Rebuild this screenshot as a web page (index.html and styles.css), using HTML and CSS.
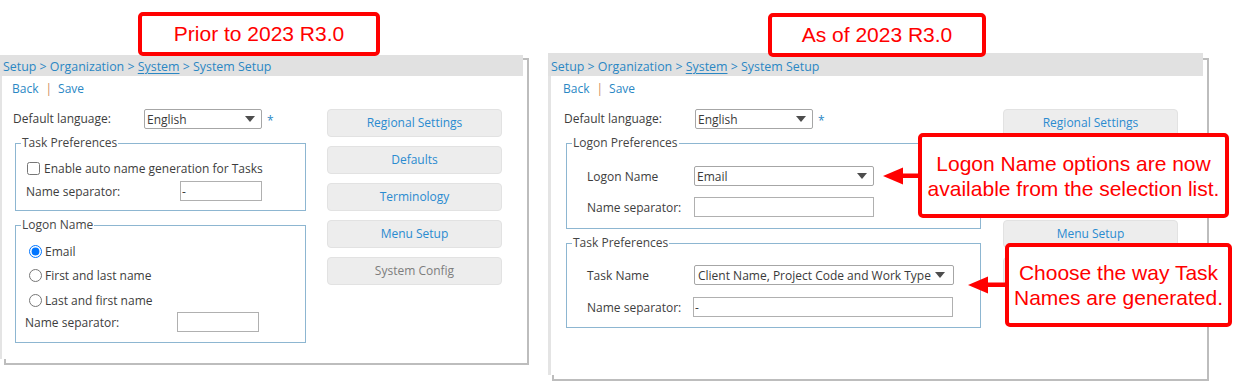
FILE: index.html
```html
<!DOCTYPE html>
<html>
<head>
<meta charset="utf-8">
<link rel="stylesheet" href="styles.css">
</head>
<body>
<div class="page">
  <div class="panel panel-old">
    <div class="crumbs">Setup &gt; Organization &gt; <u>System</u> &gt; System Setup</div>
    <div class="panel-body">
      <div class="toolbar"><span class="link">Back</span><span class="sep">|</span><span class="link">Save</span></div>
      <div class="main">
        <div class="form">
          <div class="lang-row">
            <span class="lbl lbl-lang">Default language:</span>
            <div class="select sel-lang"><span>English</span><i class="caret"></i></div>
            <span class="req">*</span>
          </div>
          <fieldset class="fs fs-old-task">
            <legend>Task Preferences</legend>
            <label class="check-row"><input type="checkbox">Enable auto name generation for Tasks</label>
            <div class="row row-sep1"><span class="lbl">Name separator:</span><input class="txt txt-old1" type="text" value="-"></div>
          </fieldset>
          <fieldset class="fs fs-old-logon">
            <legend>Logon Name</legend>
            <label class="radio-row"><input type="radio" name="ln" checked>Email</label>
            <label class="radio-row"><input type="radio" name="ln">First and last name</label>
            <label class="radio-row"><input type="radio" name="ln">Last and first name</label>
            <div class="row row-sep2"><span class="lbl">Name separator:</span><input class="txt txt-old2" type="text" value=""></div>
          </fieldset>
        </div>
        <div class="buttons">
          <div class="btn">Regional Settings</div>
          <div class="btn">Defaults</div>
          <div class="btn">Terminology</div>
          <div class="btn">Menu Setup</div>
          <div class="btn btn-dim">System Config</div>
        </div>
      </div>
    </div>
  </div>

  <div class="panel panel-new">
    <div class="crumbs">Setup &gt; Organization &gt; <u>System</u> &gt; System Setup</div>
    <div class="panel-body">
      <div class="toolbar"><span class="link">Back</span><span class="sep">|</span><span class="link">Save</span></div>
      <div class="main">
        <div class="form">
          <div class="lang-row">
            <span class="lbl lbl-lang">Default language:</span>
            <div class="select sel-lang"><span>English</span><i class="caret"></i></div>
            <span class="req">*</span>
          </div>
          <fieldset class="fs fs-new-logon">
            <legend>Logon Preferences</legend>
            <div class="row row-a"><span class="lbl lbl-new">Logon Name</span><div class="select sel-new1"><span>Email</span><i class="caret"></i></div></div>
            <div class="row row-b"><span class="lbl lbl-new">Name separator:</span><input class="txt txt-new1" type="text" value=""></div>
          </fieldset>
          <fieldset class="fs fs-new-task">
            <legend>Task Preferences</legend>
            <div class="row row-c"><span class="lbl lbl-new">Task Name</span><div class="select sel-new2"><span>Client Name, Project Code and Work Type</span><i class="caret"></i></div></div>
            <div class="row row-d"><span class="lbl lbl-new2">Name separator:</span><input class="txt txt-new2" type="text" value="-"></div>
          </fieldset>
        </div>
        <div class="buttons">
          <div class="btn">Regional Settings</div>
          <div class="btn">Defaults</div>
          <div class="btn">Terminology</div>
          <div class="btn">Menu Setup</div>
          <div class="btn btn-dim">System Config</div>
        </div>
      </div>
    </div>
  </div>
</div>

<div class="note title-old">Prior to 2023 R3.0</div>
<div class="note title-new">As of 2023 R3.0</div>

<svg class="arrow arrow1" width="36" height="18" viewBox="0 0 36 18"><polygon points="0,9 20,0.5 20,17.5" fill="#ff0000"/><rect x="19" y="6.5" width="17" height="4.5" fill="#ff0000"/></svg>
<div class="note callout callout1">Logon Name options are now<br>available from the selection list.</div>

<svg class="arrow arrow2" width="38" height="18" viewBox="0 0 38 18"><polygon points="0,9 20,0.5 20,17.5" fill="#ff0000"/><rect x="19" y="6.5" width="19" height="4.5" fill="#ff0000"/></svg>
<div class="note callout callout2">Choose the way Task<br>Names are generated.</div>
</body>
</html>
```

FILE: styles.css
```css
html {
  margin: 0;
  padding: 0;
  background: #ffffff;
}
body {
  margin: 0;
  padding: 0;
  width: 1244px;
  height: 392px;
  position: relative;
  overflow: hidden;
  font-family: "Open Sans", "Noto Sans", sans-serif;
  font-size: 12px;
  color: #3d3d3d;
}
.page {
  display: flex;
  align-items: flex-start;
  gap: 25px;
}

/* panels */
.panel {
  position: relative;
  background: #ffffff;
  display: flex;
  flex-direction: column;
}
.panel::after {
  content: "";
  position: absolute;
  left: 4px;
  top: 3px;
  right: -6px;
  bottom: -6px;
  border: 2px solid #bdbdbd;
  z-index: -1;
}
.panel-old {
  width: 523px;
  height: 304px;
  margin-top: 55px;
}
.panel-new {
  width: 655px;
  height: 322px;
  margin-top: 53px;
}
.panel-new::after {
  top: 5px;
}
.crumbs {
  box-sizing: border-box;
  background: #e1e1e1;
  color: #2a87c4;
  height: 21px;
  line-height: 20px;
  padding: 2px 0 0 3px;
  font-size: 12.4px;
  white-space: nowrap;
}
.panel-new .crumbs {
  height: 23px;
  padding-top: 4px;
}
.crumbs u {
  text-decoration-thickness: 1px;
  text-underline-offset: 2px;
}
.panel-body {
  flex: 1;
  border-left: 2px solid #e4e4e4;
  padding-left: 11px;
}
.panel-new .panel-body {
  border-left-width: 3px;
  padding-left: 13px;
}
.toolbar {
  padding-top: 4px;
  height: 18px;
  line-height: 18px;
  margin-left: -1px;
  color: #2a87c4;
}
.sep {
  color: #d08a5a;
  margin: 0 6px 0 7px;
}
.main {
  display: flex;
  align-items: flex-start;
  margin-top: 11px;
}
.form {
  display: flex;
  flex-direction: column;
}

.lbl {
  display: inline-block;
  white-space: nowrap;
}
.lang-row {
  display: flex;
  align-items: center;
  height: 20px;
}
.lbl-lang {
  width: 131px;
  margin-top: -2px;
}
.select {
  box-sizing: border-box;
  height: 20px;
  border: 1px solid #a6a6a6;
  border-radius: 2px;
  background: #ffffff;
  display: flex;
  align-items: center;
  justify-content: space-between;
  padding: 0 6px 0 2px;
  white-space: nowrap;
  color: #3a3a3a;
}
.sel-lang {
  width: 118px;
}
.caret {
  width: 0;
  height: 0;
  border-left: 5px solid transparent;
  border-right: 5px solid transparent;
  border-top: 6px solid #4d4d4d;
}
.req {
  color: #2a87c4;
  margin-left: 5px;
  margin-top: 3px;
}

.fs {
  margin: 0 0 0 2px;
  padding: 0;
  border: 1px solid #8db6d1;
  min-width: 0;
  box-sizing: border-box;
}
.fs legend {
  padding: 0 1px;
  margin-left: 5px;
  line-height: 16px;
  color: #454545;
}
.row {
  display: flex;
  align-items: center;
}
.txt {
  box-sizing: border-box;
  height: 20px;
  border: 1px solid #b0b0b0;
  font-family: "Open Sans", "Noto Sans", sans-serif;
  font-size: 12px;
  color: #3a3a3a;
  padding: 0 1px;
  margin: 0;
  outline: none;
}

/* old panel */
.fs-old-task {
  width: 291px;
  margin-top: 6px;
  padding: 0 0 9px 0;
}
.check-row {
  display: flex;
  align-items: center;
  height: 16px;
  margin: 9px 0 0 10px;
}
.check-row input {
  margin: 0 4px 0 1px;
  width: 13px;
  height: 13px;
}
.row-sep1 {
  margin: 5px 0 0 10px;
}
.row-sep1 .lbl {
  width: 154px;
}
.txt-old1 {
  width: 82px;
}
.fs-old-logon {
  width: 291px;
  margin-top: 6px;
  padding: 0 0 10px 0;
}
.radio-row {
  display: flex;
  align-items: center;
  height: 18px;
  margin-left: 12px;
  margin-top: 6.5px;
}
.radio-row:first-of-type {
  margin-top: 9px;
}
.radio-row input {
  margin: 0 3px 0 1px;
  width: 13px;
  height: 13px;
}
.row-sep2 {
  margin: 3px 0 0 9px;
}
.row-sep2 .lbl {
  width: 152px;
}
.txt-old2 {
  width: 82px;
}

/* buttons */
.buttons {
  display: flex;
  flex-direction: column;
  gap: 9px;
}
.panel-old .buttons {
  margin-left: 21px;
}
.panel-new .buttons {
  margin-left: 22px;
}
.btn {
  box-sizing: border-box;
  width: 175px;
  height: 28px;
  border: 1px solid #e2e2e2;
  border-radius: 4px;
  background: #ededed;
  color: #2a8bd0;
  text-align: center;
  line-height: 26px;
}
.btn-dim {
  color: #7d7d7d;
}

/* new panel */
.fs-new-logon {
  width: 415px;
  margin-top: 6px;
  padding: 0 0 11px 0;
}
.row-a {
  margin: 15px 0 0 20px;
}
.lbl-new {
  width: 107px;
}
.sel-new1 {
  width: 180px;
}
.row-b {
  margin: 11px 0 0 20px;
}
.txt-new1 {
  width: 180px;
}
.fs-new-task {
  width: 415px;
  margin-top: 6px;
  padding: 0 0 10px 0;
}
.row-c {
  margin: 14px 0 0 20px;
}
.sel-new2 {
  width: 260px;
  padding-left: 3px;
  padding-right: 8px;
}
.row-d {
  margin: 12px 0 0 20px;
}
.lbl-new2 {
  width: 106px;
}
.txt-new2 {
  width: 260px;
}

/* annotations */
.note {
  position: absolute;
  box-sizing: border-box;
  border: 4px solid #ff0000;
  border-radius: 5px;
  background: #ffffff;
  color: #ff0000;
  font-family: "Liberation Sans", Arial, sans-serif;
  font-size: 21px;
  text-align: center;
  white-space: nowrap;
}
.title-old {
  left: 138px;
  top: 12px;
  width: 242px;
  height: 44px;
  line-height: 36px;
}
.title-new {
  left: 768px;
  top: 13px;
  width: 218px;
  height: 44px;
  line-height: 36px;
}
.callout {
  line-height: 25px;
  display: flex;
  align-items: center;
  justify-content: center;
}
.callout1 {
  left: 918px;
  top: 133px;
  width: 311px;
  height: 85px;
}
.callout2 {
  left: 1005px;
  top: 243px;
  width: 227px;
  height: 84px;
}
.arrow {
  position: absolute;
}
.arrow1 {
  left: 883px;
  top: 167px;
}
.arrow2 {
  left: 968px;
  top: 276px;
}
```
